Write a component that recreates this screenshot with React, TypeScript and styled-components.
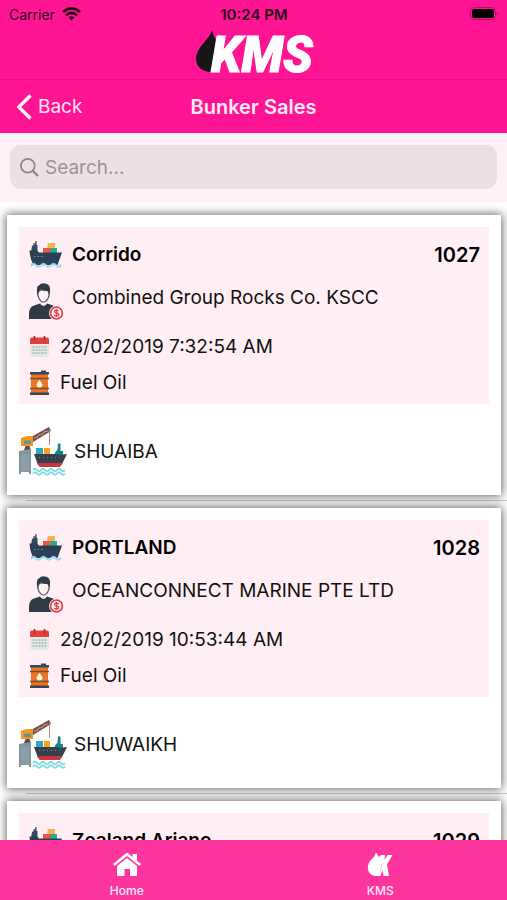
import React from "react";
import styled, { createGlobalStyle } from "styled-components";

const GlobalStyle = createGlobalStyle`
  *, *::before, *::after { box-sizing: border-box; }
  body {
    margin: 0;
    background: #fff;
    color: #111;
    font-family: Inter, "Liberation Sans", sans-serif;
  }
  button, input { font: inherit; color: inherit; }
`;

const Screen = styled.div`
  display: flex;
  flex-direction: column;
  height: 100vh;
  overflow: hidden;
`;

const Header = styled.header`
  flex: none;
  background: #ff1493;
`;

const StatusBar = styled.div`
  display: grid;
  grid-template-columns: 1fr auto 1fr;
  align-items: center;
  height: 28px;
  padding: 0 8px 0 9px;
  font-size: 14px;
  color: #2b0419;
`;

const Carrier = styled.span`
  display: flex;
  align-items: center;
  gap: 7px;
`;

const Clock = styled.time`
  font-weight: 600;
  font-size: 15px;
`;

const Battery = styled.svg`
  justify-self: end;
`;

const Brand = styled.div`
  display: flex;
  justify-content: center;
  height: 52px;
  border-bottom: 1px solid #e5138b;
`;

const LogoMark = styled.svg`
  overflow: visible;
`;

const NavBar = styled.nav`
  display: grid;
  grid-template-columns: 1fr auto 1fr;
  align-items: center;
  height: 53px;
  padding: 0 16px;
  color: #fff;
`;

const BackButton = styled.button`
  justify-self: start;
  display: flex;
  align-items: center;
  gap: 6px;
  padding: 0;
  border: 0;
  background: none;
  font-size: 19px;
  color: #ffe3f2;
  cursor: pointer;
`;

const Title = styled.h1`
  margin: 0;
  font-size: 20px;
  font-weight: 600;
  color: #ffeaf5;
`;

const SearchArea = styled.div`
  flex: none;
  padding: 12px 10px 13px;
  background: #fff0f5;
`;

const SearchField = styled.label`
  display: flex;
  align-items: center;
  gap: 6px;
  height: 44px;
  padding: 0 10px;
  border-radius: 11px;
  background: #ede0e5;
`;

const SearchInput = styled.input`
  flex: 1;
  min-width: 0;
  padding: 0;
  border: 0;
  outline: 0;
  background: none;
  font-size: 19px;
  &::placeholder { color: #9d9297; opacity: 1; }
`;

const List = styled.ul`
  flex: 1;
  min-height: 0;
  margin: 0;
  padding: 6px 0 0;
  overflow-x: hidden;
  overflow-y: auto;
  scrollbar-width: none;
  list-style: none;
`;

const Item = styled.li`
  padding: 7px 6px 6px 7px;
  background: linear-gradient(#cccccc, #cccccc) 26px 100% / 100% 1px no-repeat;
`;

const Card = styled.article`
  padding: 12px;
  background: #fff;
  box-shadow: 0 0 9px 1px rgba(0, 0, 0, 0.6);
`;

const Details = styled.div`
  display: flex;
  flex-direction: column;
  gap: 8px;
  padding: 9px 9px 7px 10px;
  background: #ffeff4;
`;

const Row = styled.div<{ $height: number; $gap: number; $top?: boolean }>`
  display: flex;
  align-items: ${(p) => (p.$top ? "flex-start" : "center")};
  gap: ${(p) => p.$gap}px;
  height: ${(p) => p.$height}px;
  font-size: 19px;
  line-height: 32px;
  white-space: nowrap;
`;

const Vessel = styled.h2`
  flex: 1;
  margin: 0;
  font-size: 19px;
  font-weight: 600;
  color: #000;
`;

const OrderNo = styled.span`
  font-size: 20px;
  font-weight: 600;
  color: #000;
`;

const Port = styled.div`
  display: flex;
  align-items: center;
  gap: 7px;
  height: 64px;
  margin-top: 15px;
  font-size: 19px;
`;

const TabBar = styled.nav`
  flex: none;
  display: grid;
  grid-template-columns: 1fr 1fr;
  height: 60px;
  background: #ff359f;
`;

const Tab = styled.button`
  display: flex;
  flex-direction: column;
  align-items: center;
  justify-content: flex-end;
  gap: 6px;
  padding: 0 0 1px;
  border: 0;
  background: none;
  font-size: 12px;
  line-height: 16px;
  font-weight: 500;
  color: #ffeaf5;
  cursor: pointer;
`;

const WifiIcon = () => (
  <svg width="19" height="14" viewBox="0 0 19 14" fill="none" stroke="#2b0419" strokeWidth="2.700" aria-hidden="true">
    <path d="M1 5Q9.500-2.400 18 5" />
    <path d="M4 8.300Q9.500 3.300 15 8.300" />
    <path d="M6.500 10.300Q9.500 8 12.500 10.300L9.500 13.500Z" fill="#2b0419" stroke="none" />
  </svg>
);

const BatteryIcon = () => (
  <Battery width="29" height="14" viewBox="0 0 29 14" role="img" aria-label="Battery full">
    <rect x="0.500" y="0.500" width="25" height="12" rx="4" fill="none" stroke="#b01069" />
    <rect x="2" y="2" width="22" height="9" rx="2.500" fill="#000" />
    <path d="M27 4.500Q29 6.500 27 8.500Z" fill="#b01069" />
  </Battery>
);

const Logo = () => (
  <LogoMark width="118" height="50" viewBox="0 0 118 50" role="img" aria-label="KMS">
    <path d="M17 2C15 11 1 19 1 31C1 39 8 44 16 44H23V15C20 11 18 7 17 2Z" fill="#17171a" />
    <text x="16" y="44" fill="#fff" stroke="#fff" strokeWidth="1" fontFamily="Roboto" fontSize="49" fontStyle="italic" fontWeight="900">KMS</text>
  </LogoMark>
);

const ChevronIcon = () => (
  <svg width="16" height="26" viewBox="0 0 16 26" fill="none" stroke="#fff" strokeWidth="3.200" aria-hidden="true">
    <path d="M14.500 1.500L2.800 13L14.500 24.500" />
  </svg>
);

const SearchIcon = () => (
  <svg width="19" height="19" viewBox="0 0 19 19" fill="none" stroke="#8e8388" aria-hidden="true">
    <circle cx="7.800" cy="7.800" r="6.900" strokeWidth="1.700" />
    <path d="M12.800 12.800L18 18" strokeWidth="2.300" />
  </svg>
);

const ShipIcon = () => (
  <svg width="34" height="30" viewBox="0 0 34 30" aria-hidden="true">
    <path d="M2 12L3 6L4.500 5V3H5.500V5L6.500 1H7.500V5H8.500V12Z" fill="#36495d" />
    <path d="M18.500 3H26V8H18.500Z" fill="#f6b355" />
    <path d="M14 8H21V13H14Z" fill="#ef5543" />
    <path d="M21 8H28V13H21Z" fill="#2fa98c" />
    <path d="M0.500 10.500H8L10 12.500H33L28.500 25H4.500Q1 19 0.500 10.500Z" fill="#2b4056" />
    <path d="M5 16.500H6.500M8.500 16.500H10M12 16.500H13.500" stroke="#7d8d9e" />
    <path d="M2 24Q4.500 21.500 7 24T12 24T17 24T22 24T27 24T32 24V26.500Q29 28.500 27 26.500T22 26.500T17 26.500T12 26.500T7 26.500T2 26.500Z" fill="#79c8e8" />
    <path d="M3 25.500Q5 24 7 25.500T12 25.500T17 25.500T22 25.500T27 25.500T31 25.500" fill="none" stroke="#d6f0fa" />
  </svg>
);

const CustomerIcon = () => (
  <svg width="36" height="40" viewBox="0 0 36 40" aria-hidden="true">
    <path d="M0 37V32Q0 25 5 23.500L11 21.500Q14.500 26 18 21.500L24 23.500Q27 24.500 28 27V37Z" fill="#303b46" />
    <path d="M11.500 18V22Q14.500 25 17.500 22V18Z" fill="#fff0f4" />
    <path d="M9 9.500Q8.500 14 10 16.500Q12 20 14.500 20Q17 20 19 16.500Q20.500 14 20 9.500L14.500 7Z" fill="#fff0f4" stroke="#4a545e" strokeWidth="1.100" />
    <path d="M8.500 13.500Q6.500 4 10.500 3Q12 0.800 16 1.500Q20.500 2 21 6.500Q21.300 10 20.300 13.500L19 9Q14.500 9.500 11.500 7.500L10 9.500Z" fill="#303b46" />
    <circle cx="27.500" cy="31" r="7.500" fill="#fff0f4" />
    <circle cx="27.500" cy="31" r="5.900" fill="#fff0f4" stroke="#dc4650" strokeWidth="1.800" />
    <path d="M29.700 29.200Q29 28 27.500 28Q25.500 28 25.500 29.500T27.500 31T29.700 32.500T27.500 34Q26 34 25.300 32.800M27.500 27V35" fill="none" stroke="#dc4650" strokeWidth="1.300" />
  </svg>
);

const CalendarIcon = () => (
  <svg width="21" height="24" viewBox="0 0 21 24" aria-hidden="true">
    <path d="M1 9H20V20Q20 22 18 22H3Q1 22 1 20Z" fill="#e4e9e6" />
    <path d="M3 2.500H18Q20 2.500 20 4.500V9H1V4.500Q1 2.500 3 2.500Z" fill="#e4403b" />
    <path d="M5.500 1V5.500M15.500 1V5.500" stroke="#a72d31" strokeWidth="1.600" />
    <path d="M3.500 12H17.500M3.500 15H17.500M3.500 18H17.500" stroke="#b4c4c0" strokeWidth="2" strokeDasharray="2 1" />
  </svg>
);

const BarrelIcon = () => (
  <svg width="21" height="26" viewBox="0 0 21 26" aria-hidden="true">
    <path d="M2 3H19V24H2Z" fill="#ed7423" />
    <path d="M1 2H12V0.500H17V2H20V4.500H1ZM1 22.500H20V25H1Z" fill="#35495a" />
    <path d="M1 8.500H20M1 18.500H20" stroke="#79513a" strokeWidth="1.500" />
    <path d="M10.500 10Q14 14 13.500 15.500Q13 17.500 10.500 17.500Q8 17.500 7.500 15.500Q7 14 10.500 10Z" fill="#fff4e4" />
  </svg>
);

const PortIcon = () => (
  <svg width="48" height="50" viewBox="0 0 48 50" aria-hidden="true">
    <path d="M12 11L30 1L32 5L14 16Z" fill="#76504a" />
    <path d="M15 12L18 11.500L20 9L23 8.500L25 6L29 5" fill="none" stroke="#c69b88" strokeWidth="1.100" />
    <path d="M30.500 4V19" stroke="#b28c82" strokeWidth="1" />
    <path d="M5 24L7 19H10L12 24Z" fill="#624948" />
    <path d="M2 12L8 10H14V20H2Z" fill="#f6941e" />
    <path d="M5 14.500H12V18H5Z" fill="#5d9991" />
    <path d="M0 25L12 23V48H10V46H2V48H0Z" fill="#82959e" />
    <path d="M2 28H10V45H2Z" fill="#8c9ea7" />
    <path d="M17 22H24V29H17Z" fill="#2faac0" />
    <path d="M25 22H31V29H25Z" fill="#fba21d" />
    <path d="M35 29L37 25L38.500 24L39 17.500H41.500V25H44V29Z" fill="#16848d" />
    <path d="M15 28H38L40 29L48 28L42.500 39H19Z" fill="#35404d" />
    <path d="M18 37H43.500L41 41H20.500Z" fill="#c9363e" />
    <path d="M20 31.500H42" stroke="#748492" strokeWidth="1" strokeDasharray="1 3" />
    <path d="M14 44Q16 41.500 18 44T22 44T26 44T30 44T34 44T38 44T42 44T46 44M14 47.500Q16 45 18 47.500T22 47.500T26 47.500T30 47.500T34 47.500T38 47.500T42 47.500T46 47.500" fill="none" stroke="#80dce3" strokeWidth="2" />
  </svg>
);

const HomeIcon = () => (
  <svg width="30" height="25" viewBox="0 0 30 25" fill="#fff" aria-hidden="true">
    <path d="M1 12L14 1.200Q15 0.400 16 1.200L20.500 5V2H25V8.700L29 12L27.500 14L15 4L2.500 14Z" />
    <path d="M5 14L15 6L25 14V23Q25 24 24 24H18V17H12.500V24H6Q5 24 5 23Z" />
  </svg>
);

const DropIcon = () => (
  <svg width="26" height="25" viewBox="0 0 26 25" fill="#fff" aria-hidden="true">
    <path d="M9 0.500Q10.500 3 12 5L14 3H18L17.500 8L20.500 3H25.500L20 12.500L22 24H16.500L15.500 18L13.500 24H8Q1 22.500 0.800 15.500Q0.700 11 5 7Q8 4 9 0.500Z" />
    <path d="M14.800 13L13 20" stroke="#ff9fd0" strokeWidth="0.700" />
  </svg>
);

const sales = [
  { id: 1027, vessel: "Corrido", customer: "Combined Group Rocks Co. KSCC", date: "28/02/2019 7:32:54 AM", product: "Fuel Oil", port: "SHUAIBA" },
  { id: 1028, vessel: "PORTLAND", customer: "OCEANCONNECT MARINE PTE LTD", date: "28/02/2019 10:53:44 AM", product: "Fuel Oil", port: "SHUWAIKH" },
  { id: 1029, vessel: "Zealand Ariano", customer: "OCEANCONNECT MARINE PTE LTD", date: "28/02/2019 11:20:10 AM", product: "Fuel Oil", port: "SHUAIBA" },
];

type Sale = (typeof sales)[number];

const SaleCard = ({ sale }: { sale: Sale }) => (
  <Item>
    <Card>
      <Details>
        <Row $height={38} $gap={9}>
          <ShipIcon />
          <Vessel>{sale.vessel}</Vessel>
          <OrderNo>{sale.id}</OrderNo>
        </Row>
        <Row $height={43} $gap={7} $top>
          <CustomerIcon />
          <span>{sale.customer}</span>
        </Row>
        <Row $height={28} $gap={10}>
          <CalendarIcon />
          <time>{sale.date}</time>
        </Row>
        <Row $height={28} $gap={10}>
          <BarrelIcon />
          <span>{sale.product}</span>
        </Row>
      </Details>
      <Port>
        <PortIcon />
        <span>{sale.port}</span>
      </Port>
    </Card>
  </Item>
);

export default function App() {
  return (
    <>
      <GlobalStyle />
      <Screen>
        <Header>
          <StatusBar>
            <Carrier>
              Carrier
              <WifiIcon />
            </Carrier>
            <Clock>10:24 PM</Clock>
            <BatteryIcon />
          </StatusBar>
          <Brand>
            <Logo />
          </Brand>
          <NavBar>
            <BackButton type="button">
              <ChevronIcon />
              Back
            </BackButton>
            <Title>Bunker Sales</Title>
          </NavBar>
        </Header>
        <SearchArea>
          <SearchField>
            <SearchIcon />
            <SearchInput type="search" placeholder="Search..." aria-label="Search" />
          </SearchField>
        </SearchArea>
        <List>
          {sales.map((sale) => (
            <SaleCard key={sale.id} sale={sale} />
          ))}
        </List>
        <TabBar>
          <Tab type="button">
            <HomeIcon />
            Home
          </Tab>
          <Tab type="button">
            <DropIcon />
            KMS
          </Tab>
        </TabBar>
      </Screen>
    </>
  );
}
